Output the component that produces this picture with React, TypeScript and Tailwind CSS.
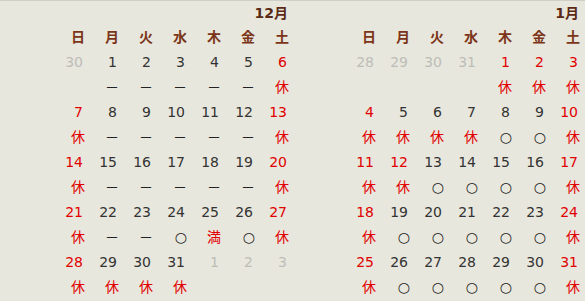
import React from "react";

type C = "n" | "r" | "g";
type Day = [string, C];
type Week = { days: Day[]; status: string[] };

const F = { fontFamily: '"DejaVu Sans", "Noto Sans CJK JP", sans-serif' };

const dash = "－";
const o = "○";

const dec: Week[] = [
  {
    days: [["30", "g"], ["1", "n"], ["2", "n"], ["3", "n"], ["4", "n"], ["5", "n"], ["6", "r"]],
    status: ["", dash, dash, dash, dash, dash, "休"],
  },
  {
    days: [["7", "r"], ["8", "n"], ["9", "n"], ["10", "n"], ["11", "n"], ["12", "n"], ["13", "r"]],
    status: ["休", dash, dash, dash, dash, dash, "休"],
  },
  {
    days: [["14", "r"], ["15", "n"], ["16", "n"], ["17", "n"], ["18", "n"], ["19", "n"], ["20", "r"]],
    status: ["休", dash, dash, dash, dash, dash, "休"],
  },
  {
    days: [["21", "r"], ["22", "n"], ["23", "n"], ["24", "n"], ["25", "n"], ["26", "n"], ["27", "r"]],
    status: ["休", dash, dash, o, "満", o, "休"],
  },
  {
    days: [["28", "r"], ["29", "n"], ["30", "n"], ["31", "n"], ["1", "g"], ["2", "g"], ["3", "g"]],
    status: ["休", "休", "休", "休", "", "", ""],
  },
];

const jan: Week[] = [
  {
    days: [["28", "g"], ["29", "g"], ["30", "g"], ["31", "g"], ["1", "r"], ["2", "r"], ["3", "r"]],
    status: ["", "", "", "", "休", "休", "休"],
  },
  {
    days: [["4", "r"], ["5", "n"], ["6", "n"], ["7", "n"], ["8", "n"], ["9", "n"], ["10", "r"]],
    status: ["休", "休", "休", "休", o, o, "休"],
  },
  {
    days: [["11", "r"], ["12", "r"], ["13", "n"], ["14", "n"], ["15", "n"], ["16", "n"], ["17", "r"]],
    status: ["休", "休", o, o, o, o, "休"],
  },
  {
    days: [["18", "r"], ["19", "n"], ["20", "n"], ["21", "n"], ["22", "n"], ["23", "n"], ["24", "r"]],
    status: ["休", o, o, o, o, o, "休"],
  },
  {
    days: [["25", "r"], ["26", "n"], ["27", "n"], ["28", "n"], ["29", "n"], ["30", "n"], ["31", "r"]],
    status: ["休", o, o, o, o, o, "休"],
  },
];

const heads = ["日", "月", "火", "水", "木", "金", "土"];

function dayColor(c: C) {
  if (c === "r") return "text-[#e00000]";
  if (c === "g") return "text-[#bdbdb8]";
  return "text-[#333333]";
}

function statusColor(s: string) {
  return s === "休" || s === "満" ? "text-[#e00000]" : "text-[#222222]";
}

function Month({ title, weeks, right }: { title: string; weeks: Week[]; right: string }) {
  return (
    <div className={`flex flex-col items-end ${right}`}>
      <div className="h-[24px] leading-[24px] text-[14px] font-bold text-[#5a2a14] pr-[1px]">{title}</div>
      <div className="grid grid-cols-[repeat(7,34px)]">
        {heads.map((h) => (
          <div key={h} className="h-[25px] leading-[25px] text-right text-[14px] font-bold text-[#7b3519]">
            {h}
          </div>
        ))}
        {weeks.map((w, wi) => (
          <React.Fragment key={wi}>
            {w.days.map(([d, c], i) => (
              <div key={"d" + i} className={`h-[25px] leading-[25px] text-right text-[14px] pr-[2px] ${dayColor(c)}`}>
                {d}
              </div>
            ))}
            {w.status.map((s, i) => (
              <div key={"s" + i} className={`h-[25px] leading-[25px] text-right text-[14px] ${statusColor(s)}`}>
                {s}
              </div>
            ))}
          </React.Fragment>
        ))}
      </div>
    </div>
  );
}

export default function App() {
  return (
    <div className="w-[585px] h-[301px] bg-[#e8e7dd] border-t border-[#cfcfc8] overflow-hidden" style={F}>
      <div className="grid grid-cols-[292px_293px]">
        <Month title="12月" weeks={dec} right="pr-[3px]" />
        <Month title="1月" weeks={jan} right="pr-[5px]" />
      </div>
    </div>
  );
}
